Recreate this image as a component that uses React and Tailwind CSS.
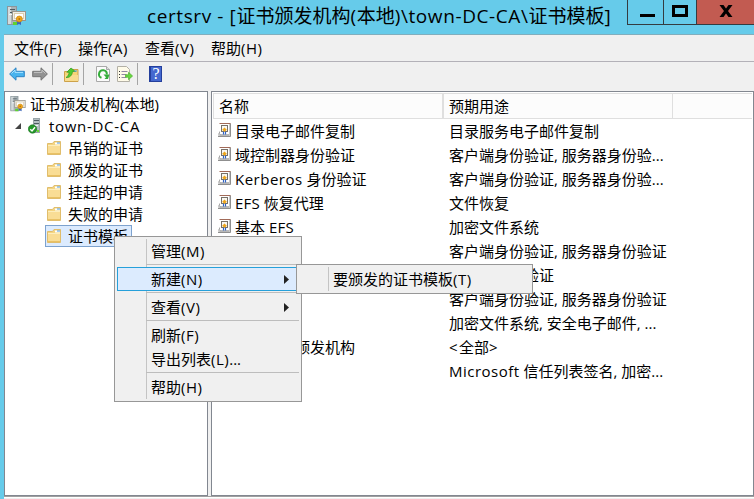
import React from "react";

const Server = ({ className }) => (
  <svg className={className} viewBox="0 0 19 20">
    <rect x="0.5" y="0.5" width="9" height="18" fill="#a9b3b7" stroke="#8b979c" />
    <rect x="1" y="1" width="3" height="17" fill="#d3dadc" />
    <path d="M3 3.5h5M3 6.5h5" stroke="#4d5b62" />
    <path d="M2 8.5h5" stroke="#f3f6f7" />
    <rect x="5.5" y="5.5" width="13" height="9" fill="#efeee9" stroke="#9a968c" />
    <rect x="7.5" y="7.5" width="9" height="5" fill="#fff" stroke="#dccfae" />
    <path d="M10 14v5l2-1 2 1v-5z" fill="#3c66b8" />
    <path d="M6 16h4v3H6z" fill="#5fd22f" />
    <circle cx="12.3" cy="13" r="3" fill="#f2a818" stroke="#c98412" strokeWidth="0.7" />
    <circle cx="12.3" cy="13" r="1" fill="#b9750c" />
  </svg>
);

const CaServer = () => (
  <svg className="h-4 w-[13px] shrink-0" viewBox="0 0 13 16">
    <rect x="5.5" y="0.5" width="6" height="14" fill="#b4bec2" stroke="#9aa5a9" />
    <path d="M6 2.5h5M6 5.5h5" stroke="#4d5b62" />
    <path d="M6 7.5h4" stroke="#f3f6f7" />
    <rect x="9" y="12" width="2" height="2" fill="#65d92e" />
    <circle cx="4.5" cy="11" r="4.2" fill="#24972a" stroke="#17701d" strokeWidth="0.6" />
    <path d="M2.3 11.2l1.7 1.8 3-3.8" fill="none" stroke="#fff" strokeWidth="1.4" />
  </svg>
);

const Folder = () => (
  <svg className="h-[14px] w-[15px] shrink-0" viewBox="0 0 15 14">
    <path d="M0.5 13.5V2.5h5l1.500-2h6.500v13z" fill="#f4d582" stroke="#e0bd6c" />
    <path d="M8 1.500h5v2H8z" fill="#fff" />
    <path d="M10 2h3" stroke="#4f9ae0" />
    <path d="M1 4.500h12v8.500H1z" fill="#f9dd95" />
    <path d="M1 4.500h12" stroke="#fdeebd" />
    <path d="M1 12.500h12" stroke="#e9c164" />
  </svg>
);

const Template = () => (
  <svg className="mb-0.5 h-[14px] w-[13px] shrink-0" viewBox="0 0 13 14">
    <path d="M0 13l2-4V0h11v13z" fill="#c9c9c9" />
    <path d="M0.500 11.500L2 8.500V12h9" fill="#e8e8e8" stroke="#a5a5a5" />
    <path d="M0 13.500h12.500V1" fill="none" stroke="#8f8f8f" />
    <rect x="2" y="1" width="9" height="10" fill="#fff" />
    <path d="M1.500 0.500h11" stroke="#a16a58" />
    <rect x="3.500" y="2.500" width="6" height="6" fill="#fbf9f2" stroke="#777168" />
    <path d="M5.500 8.500v3M7.500 8.500v3" stroke="#2f62c4" strokeWidth="1.200" />
    <path d="M6.500 4.500l2.300 2.300-2.300 2.300-2.300-2.300z" fill="#eda51c" />
  </svg>
);

const Arrow = ({ flip, fill, edge, hi }) => (
  <svg className={flip ? "h-[14px] w-4 -scale-x-100" : "h-[14px] w-4"} viewBox="0 0 16 14">
    <path d="M0.6 7L7 0.8v3.5h8.3v5.4H7v3.5z" fill={fill} stroke={edge} />
    <path d="M2.5 6.5L6 3v2.4h8" fill="none" stroke={hi} />
  </svg>
);

const UpFolder = () => (
  <svg className="h-[15px] w-[15px]" viewBox="0 0 15 15">
    <path d="M0.5 14.5V4.5h4l1-2h8.5v12z" fill="#f6d478" stroke="#cda24a" />
    <path d="M1 8h13v6H1z" fill="#f8dc90" />
    <path d="M2 10.500C4.500 9 5 7 5 5.200H2.800L7 1l4.500 3.500H8.500C8.200 8 6 11 2 10.500z" fill="#4fca2f" stroke="#2f9a20" strokeWidth="0.7" />
    <path d="M10 4h3" stroke="#4f9ae0" />
  </svg>
);

const Refresh = () => (
  <svg className="h-4 w-[14px]" viewBox="0 0 14 16">
    <path d="M0.500 0.500h10l3 3v12h-13z" fill="#fbfbfb" stroke="#a9a9a9" />
    <path d="M10.500 0.500v3h3" fill="#ddd" stroke="#a9a9a9" />
    <path d="M5.500 11.800A3.900 3.900 0 1 1 10.800 8.500" fill="none" stroke="#35ad3a" strokeWidth="2" />
    <path d="M7.500 8.500h6l-1.500 4.500h-3.500l1.500-1.800z" fill="#35ad3a" />
  </svg>
);

const Export = () => (
  <svg className="h-4 w-4" viewBox="0 0 16 16">
    <path d="M0.500 0.500h9l3 3v12h-12z" fill="#fffbe9" stroke="#b3b0a6" />
    <path d="M2 5.500h1M2 8.500h1M2 11.500h1" stroke="#333" />
    <path d="M4.500 5.500h6M4.500 8.500h5M4.500 11.500h5" stroke="#9288a5" />
    <path d="M8.500 8.800h3V6.300L15.600 10l-4.100 3.700v-2.500h-3z" fill="#68d641" stroke="#4fb331" strokeWidth="0.700" />
  </svg>
);

const Help = () => (
  <div className="flex h-4 w-[13px] items-center justify-center border border-l-2 border-[#243f9c] bg-[#4468cf] font-['Liberation_Serif',serif] text-[16px] leading-none text-white">?</div>
);

const folders = ["吊销的证书", "颁发的证书", "挂起的申请", "失败的申请", "证书模板"];
const rows = [
  ["目录电子邮件复制", "目录服务电子邮件复制"],
  ["域控制器身份验证", "客户端身份验证, 服务器身份验..."],
  ["Kerberos 身份验证", "客户端身份验证, 服务器身份验..."],
  ["EFS 恢复代理", "文件恢复"],
  ["基本 EFS", "加密文件系统"],
  ["域控制器", "客户端身份验证, 服务器身份验证"],
  ["Web 服务器", "服务器身份验证"],
  ["计算机", "客户端身份验证, 服务器身份验证"],
  ["用户", "加密文件系统, 安全电子邮件, ..."],
  ["从属证书颁发机构", "<全部>"],
  ["管理员", "Microsoft 信任列表签名, 加密..."],
];

// Latin words and brackets are set slightly wider than the Chinese text.
const Mixed = ({ text }) =>
  text.split(/([A-Za-z()<>]+)/).map((part, i) =>
    i % 2 ? (
      <span key={i} className={/[<>]/.test(part) ? "tracking-[1.5px]" : part === "EFS" ? "tracking-[0.2px]" : "tracking-[0.5px]"}>{part}</span>
    ) : (
      part
    )
  );

const Item = ({ children, arrow, active }) => (
  <div className={"flex h-6 items-center justify-between border pl-[33px] pr-[9px] " + (active ? "border-[#26a0da] bg-[#dcebfe]" : "border-transparent")}>
    <span><Mixed text={children} /></span>
    {arrow && (
      <svg className="h-[9px] w-[5px]" viewBox="0 0 5 9"><path d="M0 0l5 4.500L0 9z" fill="#222" /></svg>
    )}
  </div>
);

const Sep = () => <div className="ml-[29px] flex h-1 items-start pt-px"><div className="h-px w-full bg-[#bdbdbd]" /></div>;
const Bar = () => <div className="h-[22px] w-px bg-[#a5a5a5]" />;

export default function App() {
  return (
    <div className="relative flex h-[499px] w-[754px] flex-col overflow-hidden bg-[#66cbea] font-['Open_Sans','Noto_Sans_CJK_SC',sans-serif] text-[15px] leading-[22px] whitespace-nowrap text-black">
      <div className="flex h-[34px] items-start">
        <Server className="ml-[7px] mt-[6px] h-5 w-[19px] shrink-0" />
        <div className="ml-[121px] w-[480px] pt-[2px] text-[19px] leading-[28px]">
          <span className="tracking-[0.6px]">certsrv - [</span>证书颁发机构
          <span className="tracking-[0.6px]">(</span>本地
          <span className="tracking-[0.6px]">)\town-DC-CA\</span>证书模板]
        </div>
        <div className="flex h-[25px] w-[127px] shrink-0 border-b border-l border-[#343c40]">
          <div className="flex w-[36px] justify-center border-r border-[#343c40] pl-[3px] pt-[14px]"><div className="h-[3px] w-[15px] bg-black" /></div>
          <div className="flex w-[33px] justify-center border-r border-[#343c40] pt-[5px]"><div className="h-3 w-4 border-[3px] border-black" /></div>
          <div className="flex flex-1 justify-center bg-[#c25b51] pt-[5px]">
            <svg className="h-3 w-[14px]" viewBox="0 0 14 12"><path d="M0.500 0h4L7 3.500 9.500 0h4L9 6l4.500 6h-4L7 8.500 4.500 12h-4L5 6z" /></svg>
          </div>
        </div>
      </div>
      <div className="ml-1 flex min-h-0 flex-1 flex-col border-t border-[#82aebd] bg-[#f0f0f0]">
        <div className="flex h-[27px] shrink-0 items-center border-b border-[#b3b1b8] pl-[10px]">
          <span className="w-16"><Mixed text="文件(F)" /></span>
          <span className="w-[67px]"><Mixed text="操作(A)" /></span>
          <span className="w-[66px]"><Mixed text="查看(V)" /></span>
          <span><Mixed text="帮助(H)" /></span>
        </div>
        <div className="flex h-[29px] shrink-0 items-center pb-[5px] pl-[5px]">
          <Arrow fill="#48b3ee" edge="#2d83c4" hi="#a9e2ff" />
          <div className="w-[7px]" />
          <Arrow flip fill="#929292" edge="#747474" hi="#c4c4c4" />
          <div className="w-1" /><Bar /><div className="w-[11px]" />
          <UpFolder />
          <div className="w-1" /><Bar /><div className="w-3" />
          <Refresh /><div className="w-[7px]" /><Export />
          <div className="w-1" /><Bar /><div className="w-[11px]" /><Help />
        </div>
        <div className="flex h-[405px] shrink-0">
          <div className="w-[204px] shrink-0 border border-[#828790] bg-white pt-px">
            <div className="flex h-[22px] items-center pl-[5px]"><Server className="h-4 w-4 shrink-0" /><span className="ml-1">证书颁发机构(本地)</span></div>
            <div className="flex h-[22px] items-center pl-[10px]">
              <svg className="mr-[7px] h-[6px] w-[6px]" viewBox="0 0 6 6"><path d="M6 0v6H0z" fill="#444" /></svg>
              <CaServer /><span className="ml-[8px] tracking-[0.7px]">town-DC-CA</span>
            </div>
            {folders.map((name, i) => (
              <div key={name} className={"ml-[40px] flex h-[22px] w-[87px] items-center border pl-px " + (i === 4 ? "border-[#7da2ce] bg-[#dcebfe]" : "border-transparent")}>
                <Folder /><span className="ml-[6px]">{name}</span>
              </div>
            ))}
          </div>
          <div className="ml-[3px] w-[543px] shrink-0 border border-[#828790] bg-white px-px pt-px">
            <div className="flex h-[26px] items-center border-b border-l border-t border-[#dfdfdf] bg-[#fcfcfc]">
              <div className="h-full w-[230px] border-r-2 border-[#dfdfdf] pl-[5px] leading-[25px]">名称</div>
              <div className="h-full w-[229px] border-r border-[#dfdfdf] pl-[5px] leading-[25px]">预期用途</div>
            </div>
            {rows.map(([name, use]) => (
              <div key={name} className="flex h-6 items-center">
                <div className="flex w-[236px] items-center pl-[5px]"><Template /><span className="ml-[4px]"><Mixed text={name} /></span></div>
                <div><Mixed text={use} /></div>
              </div>
            ))}
          </div>
        </div>
        <div className="flex h-[2px] border-t border-[#a0a0a0] bg-white" />
      </div>
      <div className="absolute left-[114px] top-[236px] h-[166px] w-[188px] border border-[#979797] bg-[#f0f0f0] p-[2px]">
        <div className="absolute left-[31px] top-[2px] h-[160px] w-px bg-[#c4c4c4]" />
        <div className="relative">
          <Item>管理(M)</Item><Sep />
          <Item arrow active>新建(N)</Item><Sep />
          <Item arrow>查看(V)</Item><Sep />
          <Item>刷新(F)</Item>
          <Item>导出列表(L)...</Item><Sep />
          <Item>帮助(H)</Item>
        </div>
      </div>
      <div className="absolute left-[296px] top-[264px] flex h-[30px] w-[237px] items-center border border-[#979797] bg-[#f0f0f0]">
        <div className="ml-[31px] h-6 w-px bg-[#c4c4c4]" /><span className="ml-1"><Mixed text="要颁发的证书模板(T)" /></span>
      </div>
    </div>
  );
}
